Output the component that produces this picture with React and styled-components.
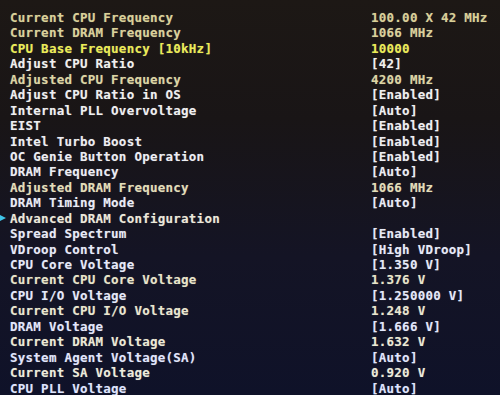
import React from "react";
import styled, { createGlobalStyle } from "styled-components";

const Global = createGlobalStyle`
  html, body { margin: 0; padding: 0; background: #0f1226; }
  #root { width: 500px; height: 395px; overflow: hidden; }
`;

const Screen = styled.div`
  width: 500px;
  height: 395px;
  box-sizing: border-box;
  padding: 10px 0 0 10px;
  background: linear-gradient(180deg, #1d1815 0%, #191516 30%, #141425 65%, #0f1229 100%);
  display: flex;
  flex-direction: column;
  font-family: "DejaVu Sans Mono", "Liberation Mono", monospace;
  font-weight: bold;
  font-size: 12.5px;
  letter-spacing: 0.25px;
  line-height: 15.45px;
`;

const Row = styled.div`
  position: relative;
  display: grid;
  grid-template-columns: 361px 1fr;
  height: 15.45px;
  white-space: pre;
  text-shadow: 0 0 1px rgba(255, 255, 240, 0.35);
`;

const Label = styled.span``;
const Value = styled.span``;

const Pointer = styled.span`
  position: absolute;
  left: -10px;
  top: 4px;
  width: 0;
  height: 0;
  border-top: 3.5px solid transparent;
  border-bottom: 3.5px solid transparent;
  border-left: 6px solid #3fc4e8;
`;

const rows = [
  ["Current CPU Frequency", "100.00 X 42 MHz", "info"],
  ["Current DRAM Frequency", "1066 MHz", "info"],
  ["CPU Base Frequency [10kHz]", "10000", "sel"],
  ["Adjust CPU Ratio", "[42]", "edit"],
  ["Adjusted CPU Frequency", "4200 MHz", "info"],
  ["Adjust CPU Ratio in OS", "[Enabled]", "edit"],
  ["Internal PLL Overvoltage", "[Auto]", "edit"],
  ["EIST", "[Enabled]", "edit"],
  ["Intel Turbo Boost", "[Enabled]", "edit"],
  ["OC Genie Button Operation", "[Enabled]", "edit"],
  ["DRAM Frequency", "[Auto]", "edit"],
  ["Adjusted DRAM Frequency", "1066 MHz", "info"],
  ["DRAM Timing Mode", "[Auto]", "edit"],
  ["Advanced DRAM Configuration", "", "sub"],
  ["Spread Spectrum", "[Enabled]", "edit"],
  ["VDroop Control", "[High VDroop]", "edit"],
  ["CPU Core Voltage", "[1.350 V]", "edit"],
  ["Current CPU Core Voltage", "1.376 V", "info"],
  ["CPU I/O Voltage", "[1.250000 V]", "edit"],
  ["Current CPU I/O Voltage", "1.248 V", "info"],
  ["DRAM Voltage", "[1.666 V]", "edit"],
  ["Current DRAM Voltage", "1.632 V", "info"],
  ["System Agent Voltage(SA)", "[Auto]", "edit"],
  ["Current SA Voltage", "0.920 V", "info"],
  ["CPU PLL Voltage", "[Auto]", "edit"],
];

const mix = (a, b, t) =>
  `rgb(${a.map((v, i) => Math.round(v + (b[i] - v) * t)).join(",")})`;

const colorFor = (kind, i) => {
  const t = i / (rows.length - 1);
  if (kind === "sel") return "#ecec52";
  if (kind === "info") return mix([218, 208, 150], [238, 236, 222], t);
  if (kind === "sub") return "#ece8da";
  return mix([244, 242, 236], [222, 228, 255], t);
};

export default function App() {
  return (
    <>
      <Global />
      <Screen>
        {rows.map(([label, value, kind], i) => (
          <Row key={label} style={{ color: colorFor(kind, i) }}>
            {kind === "sub" && <Pointer />}
            <Label>{label}</Label>
            <Value>{value}</Value>
          </Row>
        ))}
      </Screen>
    </>
  );
}
